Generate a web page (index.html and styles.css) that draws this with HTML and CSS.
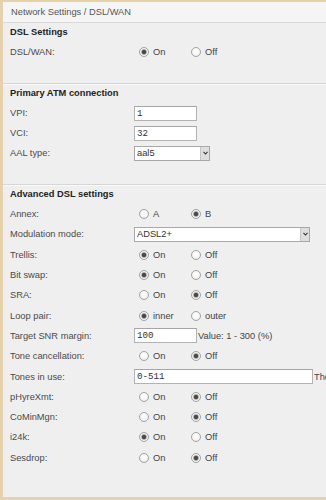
FILE: index.html
```html
<!DOCTYPE html>
<html>
<head>
<meta charset="utf-8">
<link rel="stylesheet" href="styles.css">
</head>
<body>
<div class="frame">
  <div class="titlebar">Network Settings / DSL/WAN</div>

  <section class="sec">
    <h2 class="sec-title">DSL Settings</h2>
    <div class="row"><span class="lbl">DSL/WAN:</span>
      <div class="opts"><label class="opt"><input type="radio" name="dsl" checked>On</label><label class="opt"><input type="radio" name="dsl">Off</label></div>
    </div>
  </section>

  <section class="sec sep">
    <h2 class="sec-title">Primary ATM connection</h2>
    <div class="row"><span class="lbl">VPI:</span><input class="txt" type="text" value="1"></div>
    <div class="row"><span class="lbl">VCI:</span><input class="txt" type="text" value="32"></div>
    <div class="row"><span class="lbl">AAL type:</span>
      <span class="sel sel-short"><select><option>aal5</option></select><span class="sel-btn"><svg width="5" height="4" viewBox="0 0 5 4"><path d="M0.5 0.8 L2.5 3 L4.5 0.8" fill="none" stroke="#333" stroke-width="1.1"/></svg></span></span>
    </div>
  </section>

  <section class="sec sep adv">
    <h2 class="sec-title">Advanced DSL settings</h2>
    <div class="row"><span class="lbl">Annex:</span>
      <div class="opts"><label class="opt"><input type="radio" name="annex">A</label><label class="opt"><input type="radio" name="annex" checked>B</label></div>
    </div>
    <div class="row"><span class="lbl">Modulation mode:</span>
      <span class="sel sel-long"><select><option>ADSL2+</option></select><span class="sel-btn"><svg width="5" height="4" viewBox="0 0 5 4"><path d="M0.5 0.8 L2.5 3 L4.5 0.8" fill="none" stroke="#333" stroke-width="1.1"/></svg></span></span>
    </div>
    <div class="row"><span class="lbl">Trellis:</span>
      <div class="opts"><label class="opt"><input type="radio" name="trellis" checked>On</label><label class="opt"><input type="radio" name="trellis">Off</label></div>
    </div>
    <div class="row"><span class="lbl">Bit swap:</span>
      <div class="opts"><label class="opt"><input type="radio" name="bitswap" checked>On</label><label class="opt"><input type="radio" name="bitswap">Off</label></div>
    </div>
    <div class="row"><span class="lbl">SRA:</span>
      <div class="opts"><label class="opt"><input type="radio" name="sra">On</label><label class="opt"><input type="radio" name="sra" checked>Off</label></div>
    </div>
    <div class="row"><span class="lbl">Loop pair:</span>
      <div class="opts"><label class="opt"><input type="radio" name="loop" checked>inner</label><label class="opt"><input type="radio" name="loop">outer</label></div>
    </div>
    <div class="row"><span class="lbl">Target SNR margin:</span>
      <div class="inline"><input class="txt" type="text" value="100"><span class="hint">Value: 1 - 300 (%)</span></div>
    </div>
    <div class="row"><span class="lbl">Tone cancellation:</span>
      <div class="opts"><label class="opt"><input type="radio" name="tone">On</label><label class="opt"><input type="radio" name="tone" checked>Off</label></div>
    </div>
    <div class="row"><span class="lbl">Tones in use:</span>
      <div class="inline"><input class="txt txt-wide" type="text" value="0-511"><span class="hint">The range of tones</span></div>
    </div>
    <div class="row"><span class="lbl">pHyreXmt:</span>
      <div class="opts"><label class="opt"><input type="radio" name="phy">On</label><label class="opt"><input type="radio" name="phy" checked>Off</label></div>
    </div>
    <div class="row"><span class="lbl">CoMinMgn:</span>
      <div class="opts"><label class="opt"><input type="radio" name="comin">On</label><label class="opt"><input type="radio" name="comin" checked>Off</label></div>
    </div>
    <div class="row"><span class="lbl">i24k:</span>
      <div class="opts"><label class="opt"><input type="radio" name="i24k" checked>On</label><label class="opt"><input type="radio" name="i24k">Off</label></div>
    </div>
    <div class="row"><span class="lbl">Sesdrop:</span>
      <div class="opts"><label class="opt"><input type="radio" name="ses">On</label><label class="opt"><input type="radio" name="ses" checked>Off</label></div>
    </div>
  </section>
</div>
</body>
</html>
```

FILE: styles.css
```css
html, body {
  margin: 0;
  padding: 0;
  overflow: hidden;
}
body {
  font-family: "Liberation Sans", Arial, sans-serif;
  font-size: 9.3px;
  color: #4a4a4a;
  background: #efefef;
}
.frame {
  width: 400px;
  height: 500px;
  box-sizing: border-box;
  border-left: 3px solid #e5d2ad;
  border-top: 2px solid #e5d2ad;
  border-bottom: 3px solid #e5d2ad;
  background: #efefef;
  overflow: hidden;
}
.titlebar {
  height: 20px;
  line-height: 20px;
  padding-left: 8px;
  background: #f5f5f5;
  border-bottom: 1px solid #d9d9d9;
  color: #555;
}
.sec {
  padding-bottom: 21px;
}
.sep {
  border-top: 1px solid #d6d6d6;
  box-shadow: inset 0 1px 0 #f9f9f9;
}
.sec-title {
  margin: 0;
  height: 19px;
  line-height: 19px;
  padding-left: 7px;
  font-size: 9.3px;
  font-weight: bold;
  color: #222;
}
.row {
  display: grid;
  grid-template-columns: 124px 1fr;
  align-items: center;
  height: 20px;
  padding-left: 7px;
}
.adv .row {
  height: 20.3px;
}
.lbl {
  color: #4a4a4a;
}
.opts {
  display: flex;
  padding-left: 5px;
}
.opt {
  display: flex;
  align-items: center;
  gap: 4px;
  width: 52px;
  color: #444;
}
.opt input {
  appearance: none;
  -webkit-appearance: none;
  margin: 0;
  width: 10px;
  height: 10px;
  border: 1px solid #a3a3a3;
  border-radius: 50%;
  background: radial-gradient(circle at 50% 40%, #ffffff 0, #f6f6f6 50%, #e2e2e2 100%);
  box-sizing: border-box;
  flex: none;
}
.opt input:checked {
  background: radial-gradient(circle at 50% 50%, #4a4a4a 0, #4a4a4a 1.8px, #b9b9b9 2.6px, #f4f4f4 3.4px, #e6e6e6 100%);
}
.inline {
  display: flex;
  align-items: center;
  white-space: nowrap;
}
.txt {
  width: 63px;
  height: 15px;
  box-sizing: border-box;
  border: 1px solid #b3b3b3;
  border-top-color: #a5a5a5;
  background: #fff;
  font-family: "Liberation Mono", "Courier New", monospace;
  font-size: 9.2px;
  color: #333;
  padding: 0 2px;
  margin: 0;
  outline: none;
}
.txt-wide {
  width: 179px;
}
.hint {
  margin-left: 1px;
  color: #444;
}
.sel {
  position: relative;
  display: inline-block;
  height: 15px;
}
.sel-short { width: 76px; }
.sel-long { width: 176px; }
.sel select {
  appearance: none;
  -webkit-appearance: none;
  width: 100%;
  height: 100%;
  box-sizing: border-box;
  margin: 0;
  border: 1px solid #a8a8a8;
  background: #fff;
  font-family: "Liberation Sans", Arial, sans-serif;
  font-size: 9.3px;
  color: #333;
  padding: 0 0 0 2px;
  outline: none;
}
.sel-btn {
  position: absolute;
  right: 1px;
  top: 1px;
  bottom: 1px;
  width: 8px;
  background: #dedede;
  border-left: 1px solid #c6c6c6;
  display: flex;
  align-items: center;
  justify-content: center;
}
```
